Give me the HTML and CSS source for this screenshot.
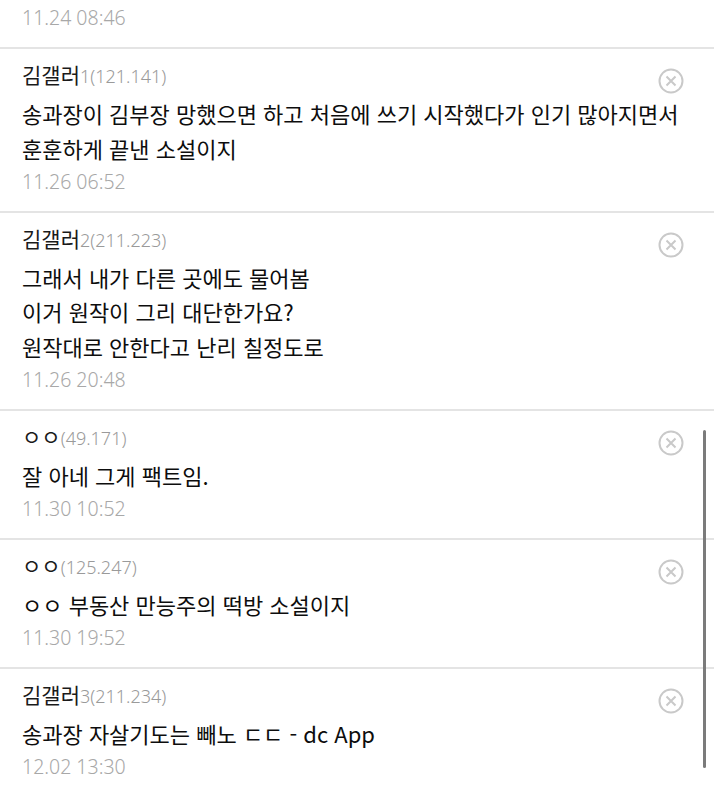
FILE: index.html
```html
<!DOCTYPE html>
<html lang="ko">
<head>
    <meta charset="UTF-8">
    <meta name="viewport" content="width=device-width, initial-scale=1.0">
    <title>댓글</title>
    <link rel="stylesheet" href="styles.css">
</head>
<body>
    <div class="comment-list">
        <div class="comment comment-tail">
            <div class="date">11.24 08:46</div>
        </div>

        <div class="comment">
            <div class="comment-head">
                <span class="writer">김갤러<span class="ip">1(121.141)</span></span>
                <button class="del-btn" aria-label="삭제">
                    <svg viewBox="0 0 26 26" width="26" height="26"><circle cx="13" cy="13" r="11.5"/><path d="M8.5 8.5l9 9M17.5 8.5l-9 9"/></svg>
                </button>
            </div>
            <p class="text">송과장이 김부장 망했으면 하고 처음에 쓰기 시작했다가 인기 많아지면서 훈훈하게 끝낸 소설이지</p>
            <div class="date">11.26 06:52</div>
        </div>

        <div class="comment">
            <div class="comment-head">
                <span class="writer">김갤러<span class="ip">2(211.223)</span></span>
                <button class="del-btn" aria-label="삭제">
                    <svg viewBox="0 0 26 26" width="26" height="26"><circle cx="13" cy="13" r="11.5"/><path d="M8.5 8.5l9 9M17.5 8.5l-9 9"/></svg>
                </button>
            </div>
            <p class="text">그래서 내가 다른 곳에도 물어봄<br>이거 원작이 그리 대단한가요?<br>원작대로 안한다고 난리 칠정도로</p>
            <div class="date">11.26 20:48</div>
        </div>

        <div class="comment">
            <div class="comment-head">
                <span class="writer">ㅇㅇ<span class="ip">(49.171)</span></span>
                <button class="del-btn" aria-label="삭제">
                    <svg viewBox="0 0 26 26" width="26" height="26"><circle cx="13" cy="13" r="11.5"/><path d="M8.5 8.5l9 9M17.5 8.5l-9 9"/></svg>
                </button>
            </div>
            <p class="text">잘 아네 그게 팩트임.</p>
            <div class="date">11.30 10:52</div>
        </div>

        <div class="comment">
            <div class="comment-head">
                <span class="writer">ㅇㅇ<span class="ip">(125.247)</span></span>
                <button class="del-btn" aria-label="삭제">
                    <svg viewBox="0 0 26 26" width="26" height="26"><circle cx="13" cy="13" r="11.5"/><path d="M8.5 8.5l9 9M17.5 8.5l-9 9"/></svg>
                </button>
            </div>
            <p class="text">ㅇㅇ 부동산 만능주의 떡방 소설이지</p>
            <div class="date">11.30 19:52</div>
        </div>

        <div class="comment">
            <div class="comment-head">
                <span class="writer">김갤러<span class="ip">3(211.234)</span></span>
                <button class="del-btn" aria-label="삭제">
                    <svg viewBox="0 0 26 26" width="26" height="26"><circle cx="13" cy="13" r="11.5"/><path d="M8.5 8.5l9 9M17.5 8.5l-9 9"/></svg>
                </button>
            </div>
            <p class="text">송과장 자살기도는 빼노 ㄷㄷ - dc App</p>
            <div class="date">12.02 13:30</div>
        </div>
    </div>

    <div class="scrollbar"></div>
</body>
</html>
```

FILE: styles.css
```css
body {
    margin: 0;
    background-color: #fff;
    font-family: "Noto Sans CJK KR", "Noto Sans", sans-serif;
    color: #111;
    overflow: hidden;
}

.comment {
    padding: 10px 0 11.5px 22px;
    border-top: 2px solid #e4e4e4;
}

.comment-tail {
    border-top: none;
    padding-top: 1px;
    padding-bottom: 12px;
}

.comment-head {
    display: flex;
    justify-content: space-between;
    align-items: flex-start;
    height: 30px;
}

.writer {
    font-size: 21px;
    line-height: 30px;
    color: #1a1a1a;
}

.ip {
    font-family: "Noto Sans", "Noto Sans CJK KR", sans-serif;
    font-size: 18px;
    font-weight: 300;
    color: #9a9a9a;
}

.del-btn {
    background: none;
    border: none;
    padding: 0;
    margin: 9px 30px -5px 0;
    width: 26px;
    height: 26px;
    cursor: pointer;
}

.del-btn svg {
    display: block;
    fill: none;
    stroke: #c9c9c9;
    stroke-width: 2;
}

.text {
    margin: 7px 0 0;
    font-size: 22px;
    line-height: 34.5px;
    color: #0d0d0d;
    word-break: keep-all;
}

.date {
    font-family: "Noto Sans", "Noto Sans CJK KR", sans-serif;
    font-size: 19.5px;
    font-weight: 300;
    line-height: 34px;
    color: #a8a8a8;
}

.scrollbar {
    position: fixed;
    left: 703px;
    top: 430px;
    width: 3px;
    height: 338px;
    border-radius: 2px;
    background-color: #7b7b7b;
}
```
